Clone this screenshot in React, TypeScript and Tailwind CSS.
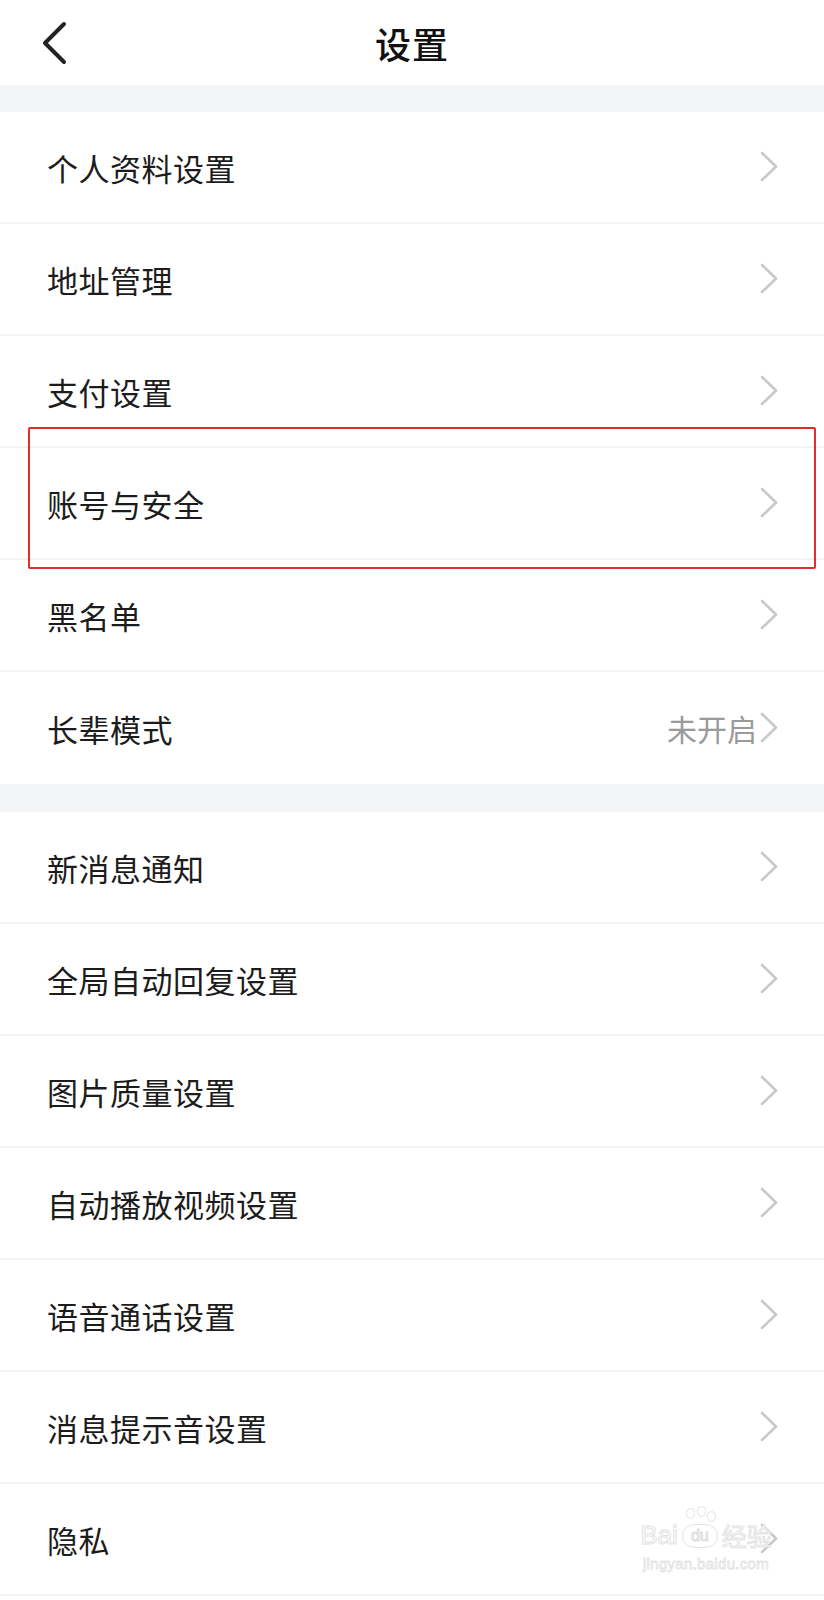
import React from "react";

const Chevron = () => (
  <svg width="20" height="32" viewBox="0 0 20 32" className="shrink-0">
    <polyline points="3,2 17,15.5 3,29" fill="none" stroke="#c9c9c9" strokeWidth="2.6" strokeLinecap="round" strokeLinejoin="round" />
  </svg>
);

type Item = { label: string; value?: string };

const Row = ({ item, last }: { item: Item; last?: boolean }) => (
  <div className={`h-[112px] flex items-center justify-between pl-[47px] pr-[45px] ${last ? "" : "border-b-2 border-[#f3f3f4]"}`}>
    <span className="text-[31px] leading-none text-[#1c1c1c] tracking-[0.5px]">{item.label}</span>
    <div className="flex items-center gap-[2px]">
      {item.value && <span className="text-[30px] leading-none text-[#9a9a9a]">{item.value}</span>}
      <Chevron />
    </div>
  </div>
);

const section1: Item[] = [
  { label: "个人资料设置" },
  { label: "地址管理" },
  { label: "支付设置" },
  { label: "账号与安全" },
  { label: "黑名单" },
  { label: "长辈模式", value: "未开启" },
];

const section2: Item[] = [
  { label: "新消息通知" },
  { label: "全局自动回复设置" },
  { label: "图片质量设置" },
  { label: "自动播放视频设置" },
  { label: "语音通话设置" },
  { label: "消息提示音设置" },
  { label: "隐私" },
];

export default function App() {
  return (
    <div className="relative w-[824px] h-[1600px] overflow-hidden bg-white font-['Noto_Sans_CJK_SC','Noto_Sans',sans-serif]">
      <header className="h-[85px] grid grid-cols-[1fr_auto_1fr] items-center">
        <div className="pl-[40px] flex items-center">
          <svg width="28" height="44" viewBox="0 0 28 44">
            <polyline points="24,3 5,22 24,41" fill="none" stroke="#222" strokeWidth="4" strokeLinecap="round" strokeLinejoin="round" />
          </svg>
        </div>
        <h1 className="text-[36px] leading-none font-medium text-[#111] tracking-[1px]">设置</h1>
        <div />
      </header>
      <div className="h-[27px] bg-[#f4f5f7]" />
      <div>
        {section1.map((it, i) => (
          <Row key={it.label} item={it} last={i === section1.length - 1} />
        ))}
      </div>
      <div className="h-[28px] bg-[#f4f5f7]" />
      <div>
        {section2.map((it) => (
          <Row key={it.label} item={it} />
        ))}
      </div>

      <div className="absolute left-[28px] top-[427px] w-[788px] h-[142px] border-2 border-[#e32c2c] rounded-[2px] pointer-events-none" />

      <div className="absolute left-[630px] top-[1508px] w-[152px] pointer-events-none flex flex-col items-center">
        <div className="flex items-end leading-none">
          <span className="text-[26px] font-['Liberation_Sans',sans-serif] text-white [-webkit-text-stroke:1px_#e2e2e2]">Bai</span>
          <span className="relative mx-[2px] w-[40px] h-[40px] flex items-end justify-center">
            <span className="absolute top-0 left-[6px] w-[9px] h-[11px] rounded-full border border-[#e4e4e4]" />
            <span className="absolute top-[-2px] left-[17px] w-[9px] h-[11px] rounded-full border border-[#e4e4e4]" />
            <span className="absolute top-[3px] left-[27px] w-[9px] h-[11px] rounded-full border border-[#e4e4e4]" />
            <span className="absolute bottom-0 left-[2px] w-[36px] h-[24px] rounded-[12px] border border-[#e4e4e4] flex items-center justify-center text-[16px] text-white [-webkit-text-stroke:1px_#dcdcdc] font-['Liberation_Sans',sans-serif]">du</span>
          </span>
          <span className="text-[25px] text-white [-webkit-text-stroke:1px_#e2e2e2]">经验</span>
        </div>
        <span className="mt-[8px] text-[15px] leading-none font-['Liberation_Sans',sans-serif] text-white [-webkit-text-stroke:0.8px_#e2e2e2] tracking-[0.3px]">jingyan.baidu.com</span>
      </div>
    </div>
  );
}
